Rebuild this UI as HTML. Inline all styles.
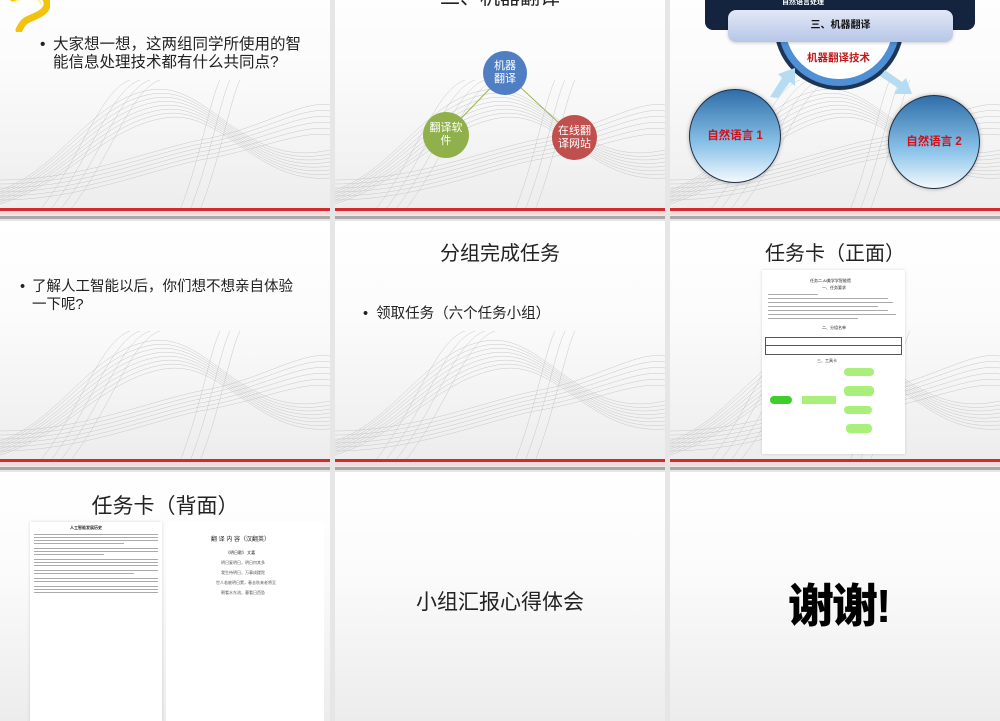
<!DOCTYPE html>
<html><head><meta charset="utf-8">
<style>
*{margin:0;padding:0;box-sizing:border-box}
body{width:1000px;height:600px;overflow:hidden;background:#e6e6e6;position:relative;font-family:"Liberation Sans","Noto Sans CJK SC",sans-serif;color:#222}
.s{position:absolute;width:330px;height:249px;overflow:hidden;background:linear-gradient(#fff 0%,#fbfbfb 40%,#ececec 100%)}
.s svg.w{position:absolute;left:0;top:110px;width:330px;height:130px}
.rl{position:absolute;left:0;top:238px;width:330px;height:3px;background:#d32a2f}
.pk{position:absolute;left:0;top:241px;width:330px;height:4px;background:#f4dada}
.gl{position:absolute;left:0;top:246px;width:330px;height:3px;background:#a9a9a9}
.t{position:absolute;white-space:nowrap}
.ttl{position:absolute;left:0;width:330px;text-align:center;font-size:20px;color:#222}
.c{position:absolute;border-radius:50%;color:#fff;font-size:11px;text-align:center;line-height:13px;display:flex;align-items:center;justify-content:center}
.doc{position:absolute;background:#fff;box-shadow:0 0 3px rgba(0,0,0,.15)}
.ln{position:absolute;height:1px;background:#aaa}
</style></head><body>
<svg width="0" height="0" style="position:absolute">
<defs>
<g id="wv" fill="none" stroke="#c8c8c8" stroke-width="0.5">
<path d="M0 110 C60 90 90 20 150 10 C210 0 240 90 330 70"/>
<path d="M0 112 C60 92 92 24 152 14 C212 4 242 92 330 74"/>
<path d="M0 114 C62 94 94 28 154 18 C214 8 244 94 330 78"/>
<path d="M0 116 C62 96 96 32 156 22 C216 12 246 96 330 82"/>
<path d="M0 118 C64 98 98 36 158 26 C218 16 248 98 330 86"/>
<path d="M0 120 C64 100 100 40 160 30 C220 20 250 100 330 90"/>
<path d="M0 122 C66 102 102 44 162 34 C222 24 252 102 330 94"/>
<path d="M0 124 C66 104 104 48 164 38 C224 28 254 104 330 98"/>
<path d="M0 100 C80 100 150 70 200 60 C260 50 300 20 330 25"/>
<path d="M0 104 C80 104 150 74 200 64 C260 54 300 26 330 31"/>
<path d="M0 108 C80 108 150 78 200 68 C260 58 300 32 330 37"/>
<path d="M0 112 C80 112 150 82 200 72 C260 62 300 38 330 43"/>
<path d="M0 116 C80 116 150 86 200 76 C260 66 300 44 330 49"/>
<path d="M0 120 C80 120 150 90 200 80 C260 70 300 50 330 55"/>
<path d="M40 130 C80 80 100 10 130 0"/><path d="M50 130 C90 80 110 10 140 0"/>
<path d="M60 130 C100 80 120 10 150 0"/><path d="M70 130 C110 80 130 10 160 0"/>
<path d="M180 130 C200 80 210 20 220 0"/><path d="M190 130 C210 80 220 20 230 0"/>
<path d="M200 130 C220 80 230 20 240 0"/>
</g>
</defs></svg>

<!-- Row 1 col 1 -->
<div class="s" style="left:0;top:-30px">
<svg class="w"><use href="#wv"/></svg>
<svg style="position:absolute;left:5px;top:20px" width="45" height="42"><path d="M8 8 C18 2 40 0 42 12 C44 22 30 26 22 30 C18 32 16 36 14 40" stroke="#f2c20f" stroke-width="7" fill="none" stroke-linecap="round"/><path d="M10 12 C20 6 34 6 36 14" stroke="#fff3a0" stroke-width="2" fill="none"/></svg>
<div class="t" style="left:40px;top:66px;font-size:15.5px;line-height:18px">•</div>
<div class="t" style="left:53px;top:66px;font-size:15.5px;line-height:18px">大家想一想，这两组同学所使用的智<br>能信息处理技术都有什么共同点?</div>
<div class="rl"></div><div class="pk"></div><div class="gl"></div>
</div>

<!-- Row 1 col 2 -->
<div class="s" style="left:335px;top:-30px">
<svg class="w"><use href="#wv"/></svg>
<div class="ttl" style="top:11px">二、机器翻译</div>
<svg style="position:absolute;left:0;top:0" width="330" height="249"><path d="M170 103 L110 165 M170 103 L239 167" stroke="#9bb35a" stroke-width="1"/></svg>
<div class="c" style="left:148px;top:81px;width:44px;height:44px;background:#4f7fc2">机器<br>翻译</div>
<div class="c" style="left:88px;top:142px;width:46px;height:46px;background:#8fb04a">翻译软<br>件</div>
<div class="c" style="left:217px;top:145px;width:45px;height:45px;background:#c0504d">在线翻<br>译网站</div>
<div class="rl"></div><div class="pk"></div><div class="gl"></div>
</div>

<!-- Row 1 col 3 -->
<div class="s" style="left:670px;top:-30px">
<svg class="w"><use href="#wv"/></svg>
<div style="position:absolute;left:108px;top:-6px;width:122px;height:122px;border-radius:50%;background:#fff;border:7px solid #4e8fd6;box-shadow:0 0 0 4px #1d3656"></div>
<div style="position:absolute;left:35px;top:0;width:270px;height:60px;background:#14243e;border-radius:0 0 8px 8px"></div>
<div class="t" style="left:112px;top:27px;font-size:7px;color:#fff;font-weight:bold">自然语言处理</div>
<div style="position:absolute;left:58px;top:40px;width:225px;height:32px;border-radius:8px;background:linear-gradient(#e2e8f6,#b7c6e8);box-shadow:0 1px 3px rgba(0,0,0,.2);text-align:center;font-size:10px;font-weight:bold;line-height:32px;color:#111">三、机器翻译</div>
<div class="t" style="left:137px;top:80px;font-size:10.5px;font-weight:bold;color:#c01818">机器翻译技术</div>
<svg style="position:absolute;left:0;top:0" width="330" height="249"><path d="M100 127 L112 108 L108 104 L125 98 L125 116 L120 112 L108 128 Z" fill="#b5dcf2"/><path d="M215 100 L232 112 L236 108 L242 124 L224 124 L228 118 L210 106 Z" fill="#b5dcf2"/></svg>
<div class="c" style="left:19px;top:119px;width:92px;height:94px;background:linear-gradient(#2e6ea8,#8cc4ea 60%,#f4f9fd);border:1.5px solid #1d2d45;box-shadow:0 0 4px rgba(0,0,0,.3);color:#d0101a;font-weight:bold;font-size:11.5px">自然语言 1</div>
<div class="c" style="left:218px;top:125px;width:92px;height:94px;background:linear-gradient(#2e6ea8,#8cc4ea 60%,#f4f9fd);border:1.5px solid #1d2d45;box-shadow:0 0 4px rgba(0,0,0,.3);color:#d0101a;font-weight:bold;font-size:11.5px">自然语言 2</div>
<div class="rl"></div><div class="pk"></div><div class="gl"></div>
</div>

<!-- Row 2 col 1 -->
<div class="s" style="left:0;top:221px">
<svg class="w"><use href="#wv"/></svg>
<div class="t" style="left:20px;top:57px;font-size:14.5px;line-height:18px">•</div>
<div class="t" style="left:32px;top:57px;font-size:14.5px;line-height:18px">了解人工智能以后，你们想不想亲自体验<br>一下呢?</div>
<div class="rl"></div><div class="pk"></div><div class="gl"></div>
</div>

<!-- Row 2 col 2 -->
<div class="s" style="left:335px;top:221px">
<svg class="w"><use href="#wv"/></svg>
<div class="ttl" style="top:16px">分组完成任务</div>
<div class="t" style="left:28px;top:81px;font-size:14.5px">•&nbsp;&nbsp;领取任务（六个任务小组）</div>
<div class="rl"></div><div class="pk"></div><div class="gl"></div>
</div>

<!-- Row 2 col 3 -->
<div class="s" style="left:670px;top:221px">
<svg class="w"><use href="#wv"/></svg>
<div class="ttl" style="top:16px">任务卡（正面）</div>
<div class="doc" style="left:92px;top:49px;width:143px;height:184px">
<div class="t" style="left:48px;top:8px;font-size:4px">任务二 AI美学学智能馆</div>
<div class="t" style="left:60px;top:15px;font-size:4px">一、任务要求</div>
<div class="ln" style="left:6px;top:24px;width:50px"></div>
<div class="ln" style="left:6px;top:28px;width:120px"></div>
<div class="ln" style="left:6px;top:32px;width:125px"></div>
<div class="ln" style="left:6px;top:36px;width:110px"></div>
<div class="ln" style="left:6px;top:40px;width:120px"></div>
<div class="ln" style="left:6px;top:44px;width:128px"></div>
<div class="ln" style="left:6px;top:48px;width:90px"></div>
<div class="t" style="left:60px;top:55px;font-size:4px">二、分组名单</div>
<div style="position:absolute;left:3px;top:67px;width:137px;height:18px;border:1px solid #555"></div>
<div class="ln" style="left:3px;top:75px;width:137px;background:#555"></div>
<div class="t" style="left:55px;top:88px;font-size:4px">三、工具卡</div>
<div style="position:absolute;left:8px;top:126px;width:22px;height:8px;border-radius:4px;background:#3fcf2b"></div>
<div style="position:absolute;left:40px;top:126px;width:34px;height:8px;background:#a8f07a"></div>
<div style="position:absolute;left:82px;top:98px;width:30px;height:8px;border-radius:4px;background:#a8f07a"></div>
<div style="position:absolute;left:82px;top:116px;width:30px;height:10px;border-radius:4px;background:#a8f07a"></div>
<div style="position:absolute;left:82px;top:136px;width:28px;height:8px;border-radius:4px;background:#a8f07a"></div>
<div style="position:absolute;left:84px;top:154px;width:26px;height:9px;border-radius:4px;background:#a8f07a"></div>
</div>
<div class="rl"></div><div class="pk"></div><div class="gl"></div>
</div>

<!-- Row 3 col 1 -->
<div class="s" style="left:0;top:472px">
<div class="ttl" style="top:18px;font-size:21px">任务卡（背面）</div>
<div class="doc" style="left:30px;top:50px;width:132px;height:200px">
<div class="t" style="left:40px;top:3px;font-size:4px;font-weight:bold">人工智能发展历史</div>
<div class="ln" style="left:4px;top:12px;width:124px"></div><div class="ln" style="left:4px;top:15px;width:124px"></div>
<div class="ln" style="left:4px;top:18px;width:124px"></div><div class="ln" style="left:4px;top:21px;width:90px"></div>
<div class="ln" style="left:4px;top:26px;width:124px"></div><div class="ln" style="left:4px;top:29px;width:124px"></div>
<div class="ln" style="left:4px;top:32px;width:70px"></div><div class="ln" style="left:4px;top:37px;width:124px"></div>
<div class="ln" style="left:4px;top:40px;width:124px"></div><div class="ln" style="left:4px;top:43px;width:124px"></div>
<div class="ln" style="left:4px;top:48px;width:124px"></div><div class="ln" style="left:4px;top:51px;width:100px"></div>
<div class="ln" style="left:4px;top:56px;width:124px"></div><div class="ln" style="left:4px;top:59px;width:124px"></div>
<div class="ln" style="left:4px;top:64px;width:124px"></div><div class="ln" style="left:4px;top:67px;width:124px"></div>
<div class="ln" style="left:4px;top:70px;width:124px"></div>
</div>
<div class="doc" style="left:166px;top:50px;width:158px;height:200px;box-shadow:none">
<div class="t" style="left:45px;top:12px;font-size:6px">翻 译 内 容（汉翻英）</div>
<div class="t" style="left:60px;top:28px;font-size:4px">《明日歌》 文嘉</div>
<div class="t" style="left:55px;top:38px;font-size:4px;color:#555">明日复明日，明日何其多</div>
<div class="t" style="left:55px;top:48px;font-size:4px;color:#555">我生待明日，万事成蹉跎</div>
<div class="t" style="left:50px;top:58px;font-size:4px;color:#555">世人若被明日累，春去秋来老将至</div>
<div class="t" style="left:55px;top:68px;font-size:4px;color:#555">朝看水东流，暮看日西坠</div>
</div>
</div>

<!-- Row 3 col 2 -->
<div class="s" style="left:335px;top:472px">
<div class="ttl" style="top:114px;font-size:21px">小组汇报心得体会</div>
</div>

<!-- Row 3 col 3 -->
<div class="s" style="left:670px;top:472px">
<div class="t" style="left:118px;top:98px;font-size:46px;font-weight:900;color:#000;letter-spacing:-2px">谢谢!</div>
</div>
</body></html>
